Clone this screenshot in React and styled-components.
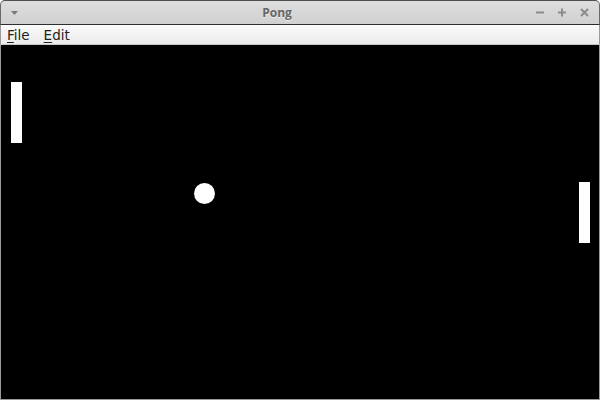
import React from 'react';
import styled, { createGlobalStyle } from 'styled-components';

const Global = createGlobalStyle`
  html, body { margin: 0; padding: 0; background: #ffffff; }
  body { font-family: "DejaVu Sans", sans-serif; }
`;

const App = () => {
  return (
    <>
      <Global />
      <Window>
        <TitleBar>
          <MenuArrow viewBox="0 0 7 4">
            <path d="M0 0 L7 0 L3.5 4 Z" fill="#7a7a7a" />
          </MenuArrow>
          <Title>Pong</Title>
          <Controls>
            <Control viewBox="0 0 9 9">
              <rect x="0" y="3.5" width="8" height="2" fill="#8c8c8c" />
            </Control>
            <Control viewBox="0 0 9 9">
              <rect x="0" y="3.5" width="8" height="2" fill="#8c8c8c" />
              <rect x="3" y="0.5" width="2" height="8" fill="#8c8c8c" />
            </Control>
            <Control viewBox="0 0 9 9">
              <path d="M1 1 L8 8 M8 1 L1 8" stroke="#8c8c8c" strokeWidth="2" />
            </Control>
          </Controls>
        </TitleBar>
        <MenuBar>
          <MenuItem><u>F</u>ile</MenuItem>
          <MenuItem><u>E</u>dit</MenuItem>
        </MenuBar>
        <Court>
          <Paddle $x={10} $y={37} />
          <Paddle $x={578} $y={137} />
          <Ball $x={193} $y={138} />
        </Court>
      </Window>
    </>
  );
};

export default App;

const Window = styled.div`
  width: 600px;
  height: 400px;
  display: flex;
  flex-direction: column;
  box-sizing: border-box;
  overflow: hidden;
`;

const TitleBar = styled.div`
  height: 25px;
  display: flex;
  align-items: center;
  background: linear-gradient(#dedede, #d0d0d0);
  border-top: 1px solid #4e4e4e;
  border-left: 1px solid #6a6a6a;
  border-right: 1px solid #6a6a6a;
  border-bottom: 1px solid #2e2e2e;
  border-radius: 5px 5px 0 0;
  box-sizing: border-box;
  padding: 0 10px 0 10px;
`;

const MenuArrow = styled.svg`
  width: 7px;
  height: 4px;
  margin-top: 1px;
`;

const Title = styled.div`
  flex: 1;
  text-align: center;
  font-family: "Open Sans", "DejaVu Sans", sans-serif;
  font-weight: 700;
  font-size: 12px;
  color: #666666;
  text-shadow: 0 1px 0 #efefef;
`;

const Controls = styled.div`
  display: flex;
  align-items: center;
  gap: 13px;
`;

const Control = styled.svg`
  width: 9px;
  height: 9px;
`;

const MenuBar = styled.div`
  height: 19px;
  display: flex;
  align-items: center;
  gap: 14px;
  padding: 0 6px;
  background: linear-gradient(#fafafa, #ebebeb);
  border-left: 1px solid #9a9a9a;
  border-right: 1px solid #9a9a9a;
  border-bottom: 1px solid #c6c6c6;
`;

const MenuItem = styled.span`
  font-size: 13.5px;
  color: #1e1e1e;

  u {
    text-decoration-thickness: 1px;
    text-underline-offset: 2px;
  }
`;

const Court = styled.div`
  flex: 1;
  position: relative;
  background: #000000;
  border-left: 1px solid #9a9a9a;
  border-right: 1px solid #9a9a9a;
  border-bottom: 1px solid #9a9a9a;
`;

const Paddle = styled.div`
  position: absolute;
  left: ${p => p.$x}px;
  top: ${p => p.$y}px;
  width: 11px;
  height: 61px;
  background: #ffffff;
`;

const Ball = styled.div`
  position: absolute;
  left: ${p => p.$x}px;
  top: ${p => p.$y}px;
  width: 21px;
  height: 21px;
  border-radius: 50%;
  background: #ffffff;
`;
